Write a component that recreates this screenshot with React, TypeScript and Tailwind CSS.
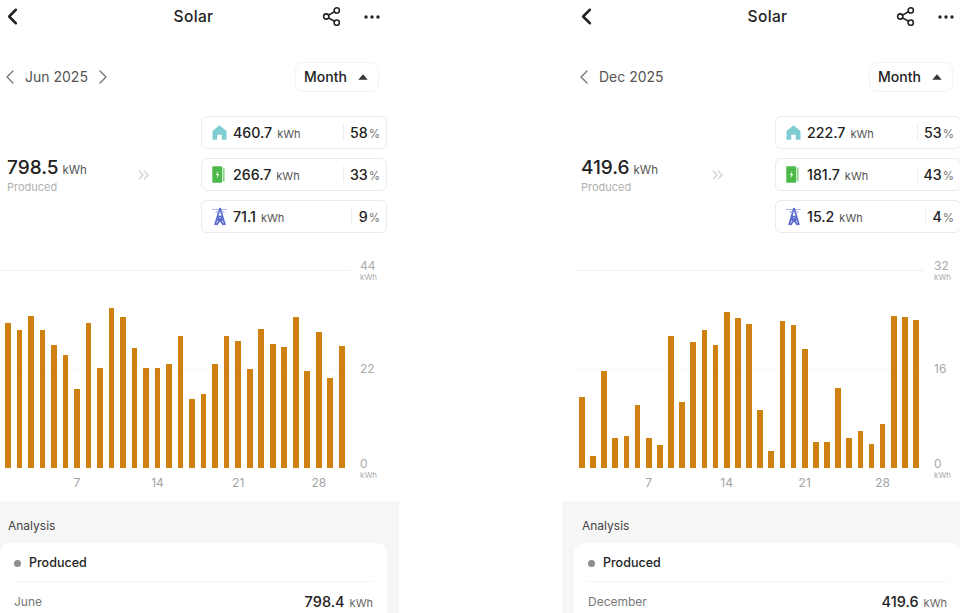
import React from "react";
import { ChevronLeft, ChevronRight, Share2 } from "lucide-react";

const BASE = 654;
const june = [220,241,197,239,284,315,418,220,355,174,201,295,353,353,341,258,446,432,341,258,274,357,238,281,292,201,363,246,385,289];
const dec = [441,617,362,565,559,466,563,585,258,457,277,241,284,187,205,223,480,602,214,224,298,576,577,413,565,542,581,523,198,201,211];

function HouseIcon() {
  return (
    <svg width="15" height="15" viewBox="0 0 15 15" className="shrink-0">
      <path d="M7.5 0.3 L14.5 6 V14.7 H9.8 V9.8 H5.2 V14.7 H0.5 V6 Z" fill="#7fcdd2" />
    </svg>
  );
}
function BatteryIcon() {
  return (
    <svg width="13" height="17" viewBox="0 0 13 17" className="shrink-0">
      <rect x="0.3" y="0.3" width="9.7" height="16.4" rx="0.8" fill="#4cb84a" />
      <rect x="10.6" y="1.5" width="2" height="14" fill="#8fd48d" />
      <path d="M6.2 5 L3.8 9 H5.4 L4.6 12.4 L7.2 8 H5.5 Z" fill="#ffffff" />
    </svg>
  );
}
function TowerIcon() {
  return (
    <svg width="16" height="19" viewBox="0 0 16 19" className="shrink-0">
      <path d="M0.5 2.5 H15.5" stroke="#8d99dd" strokeWidth="1" strokeDasharray="2 1" fill="none" />
      <path d="M8 1 L3 18 M8 1 L13 18 M5.6 9.5 H10.4 M4.5 13 L11.5 13 M5.5 9.5 L11.5 18 M10.5 9.5 L4.5 18" stroke="#5668c9" strokeWidth="1.7" fill="none" />
      <path d="M3.5 5 H12.5" stroke="#8d99dd" strokeWidth="1" fill="none" />
    </svg>
  );
}
function Dots() {
  return (
    <svg width="16" height="4" viewBox="0 0 16 4" className="shrink-0">
      <circle cx="2" cy="2" r="1.7" fill="#222" />
      <circle cx="8" cy="2" r="1.7" fill="#222" />
      <circle cx="14" cy="2" r="1.7" fill="#222" />
    </svg>
  );
}

function Card({ icon, value, pct, divider }: { icon: React.ReactNode; value: string; pct: string; divider: number }) {
  return (
    <div className="flex h-[33px] items-center rounded-md border border-[#ebebeb] bg-white pl-[10px] pr-[6px]">
      <div className="flex w-[21px] justify-start">{icon}</div>
      <div className="flex items-baseline">
        <span className="text-[14.2px] font-medium text-[#222]">{value}</span>
        <span className="ml-[5px] text-[11px] text-[#555]">kWh</span>
      </div>
      <div className="ml-auto flex items-center">
        <div className="h-[16px] w-px bg-[#eeeeee]" />
        <div className="flex items-baseline justify-end" style={{ width: divider }}>
          <span className="text-[14.2px] font-medium text-[#222]">{pct}</span>
          <span className="ml-px text-[11.5px] text-[#777]">%</span>
        </div>
      </div>
    </div>
  );
}

function Chart({ tops, max, mid, ticks }: { tops: number[]; max: string; mid: string; ticks: number[] }) {
  return (
    <div className="relative mt-[37px] h-[198px] pl-[17px]">
      <div className="absolute left-[12px] top-0 h-px w-[350px] bg-[#efefef]" />
      <div className="absolute left-[12px] top-[99px] h-px w-[350px] bg-[#f8f8f8]" />
      <div className="absolute left-[372px] top-[-10px] text-[12px] leading-[12px] text-[#aaa]">{max}</div>
      <div className="absolute left-[372px] top-[3px] text-[8px] leading-[8px] text-[#aaa]">kWh</div>
      <div className="absolute left-[372px] top-[93px] text-[12px] leading-[12px] text-[#aaa]">{mid}</div>
      <div className="absolute left-[372px] top-[188px] text-[12px] leading-[12px] text-[#aaa]">0</div>
      <div className="absolute left-[372px] top-[201px] text-[8px] leading-[8px] text-[#aaa]">kWh</div>
      <div className="relative flex h-[198px] w-[340px] items-end justify-between">
        {tops.map((t, i) => (
          <div key={i} className="w-[5.7px] bg-[#cf800f]" style={{ height: (BASE - t) / 3 }} />
        ))}
      </div>
      <div className="mt-[8px] flex w-[340px] justify-between">
        {tops.map((_, i) => (
          <div key={i} className="flex w-[5.7px] justify-center whitespace-nowrap text-[12px] leading-[14px] text-[#a3a3a3]">
            {ticks.includes(i + 1) ? i + 1 : ""}
          </div>
        ))}
      </div>
    </div>
  );
}

function Panel({
  date, next, produced, cards, tops, max, mid, month, total, className,
}: {
  date: string; next: boolean; produced: string;
  cards: { value: string; pct: string; divider: number }[];
  tops: number[]; max: string; mid: string; month: string; total: string; className: string;
}) {
  const icons = [<HouseIcon />, <BatteryIcon />, <TowerIcon />];
  return (
    <div className={`flex h-[613px] w-[411px] shrink-0 flex-col bg-white ${className}`}>
      <div className="relative flex h-[33px] items-center justify-center">
        <ChevronLeft size={27} strokeWidth={2.2} color="#222" className="absolute left-[11px] top-[3px]" />
        <span className="text-[15.5px] font-medium tracking-wide text-[#222]">Solar</span>
        <div className="absolute right-[19px] top-[6px] flex items-center gap-[22px]">
          <Share2 size={21} strokeWidth={1.8} color="#222" />
          <Dots />
        </div>
      </div>

      <div className="mt-[29px] flex h-[30px] items-center justify-between pl-[10px] pr-[20px]">
        <div className="flex items-center">
          <ChevronLeft size={24} strokeWidth={1.4} color="#777" />
          <span className="ml-[3px] text-[14px] leading-[14px] text-[#555]">{date}</span>
          {next && <ChevronRight size={24} strokeWidth={1.4} color="#777" className="ml-[3px]" />}
        </div>
        <div className="flex h-[30px] w-[84px] items-center justify-between rounded-lg border border-[#f3f3f3] pb-px pl-[8px] pr-[10px]">
          <span className="text-[14px] font-medium text-[#222]">Month</span>
          <svg width="10" height="6" viewBox="0 0 10 6"><path d="M5 0.2 L9.7 5.8 H0.3 Z" fill="#333" /></svg>
        </div>
      </div>

      <div className="mt-[24px] flex items-center pl-[19px] pr-[12px]">
        <div className="flex w-[131px] flex-col">
          <div className="flex items-baseline">
            <span className="text-[19px] font-medium leading-[24px] text-[#222]">{produced}</span>
            <span className="ml-[4px] text-[11.5px] text-[#555]">kWh</span>
          </div>
          <span className="text-[11px] leading-[14px] text-[#b0b0b0]">Produced</span>
        </div>
        <svg width="11" height="10" viewBox="0 0 11 10" className="shrink-0">
          <path d="M1 0.8 L5 5 L1 9.2 M6 0.8 L10 5 L6 9.2" stroke="#d6d6d6" strokeWidth="1.5" fill="none" />
        </svg>
        <div className="ml-[52px] flex w-[186px] flex-col gap-[9px]">
          {cards.map((c, i) => (
            <Card key={i} icon={icons[i]} value={c.value} pct={c.pct} divider={c.divider} />
          ))}
        </div>
      </div>

      <Chart tops={tops} max={max} mid={mid} ticks={[7, 14, 21, 28]} />

      <div className="mt-[33px] flex flex-1 flex-col overflow-hidden bg-[#f7f6f6] px-[12px] pt-[17px]">
        <div className="pl-[8px] text-[12px] leading-[15px] text-[#444]">Analysis</div>
        <div className="mt-[10px] flex-1 rounded-t-[10px] bg-white px-[14px]">
          <div className="flex h-[39px] items-center border-b border-[#f2f2f2] pt-[3px]">
            <div className="h-[7px] w-[7px] rounded-full bg-[#8e8e8e]" />
            <span className="ml-[8px] text-[12.5px] font-medium text-[#222]">Produced</span>
          </div>
          <div className="flex h-[38px] items-center justify-between pt-[1px]">
            <span className="text-[12px] text-[#777]">{month}</span>
            <div className="flex items-baseline">
              <span className="text-[14.5px] font-medium text-[#222]">{total}</span>
              <span className="ml-[5px] text-[11px] text-[#666]">kWh</span>
            </div>
          </div>
        </div>
      </div>
    </div>
  );
}

export default function App() {
  return (
    <div className="flex h-[613px] w-[960px] gap-[163px] overflow-hidden bg-white font-['Inter',sans-serif]">
      <Panel
        className="-ml-[12px]"
        date="Jun 2025"
        next
        produced="798.5"
        cards={[
          { value: "460.7", pct: "58", divider: 36 },
          { value: "266.7", pct: "33", divider: 36 },
          { value: "71.1", pct: "9", divider: 28 },
        ]}
        tops={june}
        max="44"
        mid="22"
        month="June"
        total="798.4"
      />
      <Panel
        className=""
        date="Dec 2025"
        next={false}
        produced="419.6"
        cards={[
          { value: "222.7", pct: "53", divider: 36 },
          { value: "181.7", pct: "43", divider: 36 },
          { value: "15.2", pct: "4", divider: 28 },
        ]}
        tops={dec}
        max="32"
        mid="16"
        month="December"
        total="419.6"
      />
    </div>
  );
}
